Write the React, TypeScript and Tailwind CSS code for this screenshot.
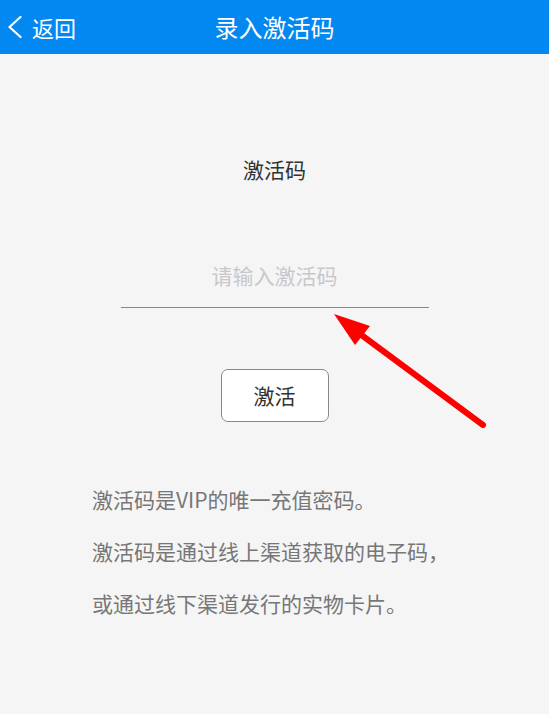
import React from 'react';

const font = { fontFamily: '"Noto Sans CJK SC", "Noto Sans", sans-serif' };

const Header = () => (
  <div className="relative flex h-[54px] items-center bg-[#0288f0] text-white">
    <button className="flex items-center gap-[10px] pl-[8px]">
      <svg width="14" height="24" viewBox="0 0 14 24" fill="none">
        <polyline points="12.5,2 1.5,12 12.5,22" stroke="white" strokeWidth="2.2" strokeLinecap="round" strokeLinejoin="round" />
      </svg>
      <span className="text-[22px] leading-none">返回</span>
    </button>
    <div className="absolute left-1/2 -translate-x-1/2 text-[24px] leading-none">录入激活码</div>
  </div>
);

const Arrow = () => (
  <svg className="pointer-events-none absolute left-0 top-0" width="549" height="714" viewBox="0 0 549 714">
    <line x1="483" y1="425" x2="352" y2="328" stroke="#ff0000" strokeWidth="6" strokeLinecap="round" />
    <polygon points="334,314 370,326 355,345" fill="#ff0000" />
  </svg>
);

export default function App() {
  return (
    <div className="relative h-[714px] w-[549px] overflow-hidden bg-[#f5f5f5]" style={font}>
      <Header />
      <div className="flex flex-col items-center pt-[101px]">
        <div className="text-[21px] leading-[28px] text-[#333]">激活码</div>
        <div className="mt-[72px] w-[308px] border-b border-[#888] pb-[12px]">
          <input
            className="h-[40px] w-full bg-transparent text-center text-[21px] text-[#333] outline-none placeholder:text-[#c8c8cc]"
            placeholder="请输入激活码"
          />
        </div>
        <button className="mt-[61px] h-[53px] w-[108px] rounded-[7px] border border-[#888] bg-white text-[21px] text-[#333]">
          激活
        </button>
      </div>
      <div className="mt-[51px] pl-[92px] text-[21px] leading-[52px] text-[#777] whitespace-nowrap">
        <p>激活码是VIP的唯一充值密码。</p>
        <p>激活码是通过线上渠道获取的电子码，</p>
        <p>或通过线下渠道发行的实物卡片。</p>
      </div>
      <Arrow />
    </div>
  );
}
